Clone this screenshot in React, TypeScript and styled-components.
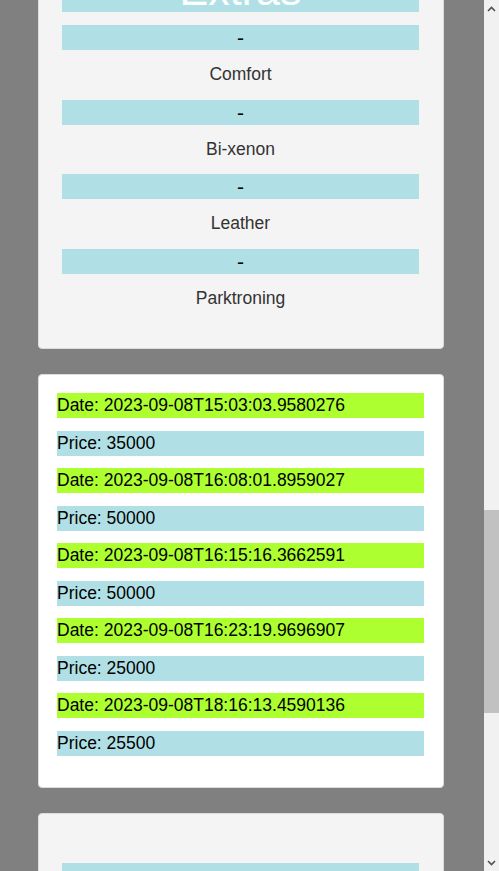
import React, { useLayoutEffect, useState } from "react";
import styled, { createGlobalStyle } from "styled-components";

const GlobalStyle = createGlobalStyle`
  html, body {
    margin: 0;
    padding: 0;
    background: #808080;
  }
  body {
    font-family: "Liberation Sans", Arial, sans-serif;
  }
`;

const Page = styled.main`
  display: flex;
  flex-direction: column;
  gap: 25.5px;
  padding: 25px 55px 25px 38px;
`;

const Card = styled.section<{ $tone: "gray" | "white" }>`
  box-sizing: border-box;
  width: 406px;
  border: 1px solid #dcdcdc;
  border-radius: 4px;
  background: ${(p) => (p.$tone === "gray" ? "#f4f4f4" : "#ffffff")};
`;

const CarCard = styled(Card)`
  display: flex;
  flex-direction: column;
  padding: 49px 24px 24px 23px;
`;

const BidCard = styled(Card)`
  display: flex;
  flex-direction: column;
  gap: 12.5px;
  padding: 18px 19px 31px 18px;
`;

const Heading = styled.h2`
  margin: 0;
  height: 44px;
  line-height: 44px;
  background: #b0e0e6;
  color: #ffffff;
  font-size: 43px;
  font-weight: normal;
  text-align: center;
  overflow: hidden;
`;

const TitleHeading = styled(Heading)`
  height: 60px;
  line-height: 64px;
`;

const Section = styled.div`
  display: flex;
  flex-direction: column;
  margin-top: 13px;
`;

const Label = styled.p`
  margin: 0;
  height: 49.67px;
  line-height: 48px;
  color: #333333;
  font-size: 17.5px;
  text-align: center;
`;

const RemoveButton = styled.button`
  display: block;
  width: 100%;
  height: 25px;
  margin: 0;
  padding: 0;
  border: none;
  background: #b0e0e6;
  color: #000000;
  font-family: "Liberation Sans", Arial, sans-serif;
  font-size: 21px;
  line-height: 25px;
  cursor: pointer;
`;

const BidRow = styled.p<{ $kind: "date" | "price" }>`
  margin: 0;
  height: 25px;
  line-height: 25px;
  background: ${(p) => (p.$kind === "date" ? "#adff2f" : "#b0e0e6")};
  color: #000000;
  font-size: 17.5px;
  white-space: nowrap;
`;

/* Scroll indicator overlay pinned to the right edge of the viewport */
const ScrollRail = styled.div`
  position: fixed;
  top: 0;
  right: 0;
  width: 15px;
  height: 100vh;
  display: flex;
  flex-direction: column;
  background: #f1f1f1;
  z-index: 10;
`;

const RailButton = styled.div`
  flex: 0 0 17px;
  display: flex;
  align-items: center;
  justify-content: center;
`;

const RailTrack = styled.div`
  position: relative;
  flex: 1;
`;

const RailThumb = styled.div`
  position: absolute;
  left: 0;
  right: 0;
  background: #c1c1c1;
`;

type Bid = { date: string; price: number };
type Car = {
  title: string;
  details: string[];
  extras: string[];
  bids: Bid[];
};

const cars: Car[] = [
  {
    title: "Opel Astra",
    details: [
      "Brand: Opel",
      "Model: Astra",
      "Year: 2014",
      "Engine: Diesel",
      "Mileage: 168000",
      "Starting price: 12000",
    ],
    extras: ["Navigation", "Climatronic", "Alloy wheels"],
    bids: [
      { date: "2023-09-07T09:12:44.1023847", price: 12000 },
      { date: "2023-09-07T09:40:02.5521093", price: 12500 },
      { date: "2023-09-07T10:05:19.8810246", price: 13000 },
      { date: "2023-09-07T11:22:37.3309581", price: 13500 },
      { date: "2023-09-07T12:48:56.0045712", price: 14000 },
      { date: "2023-09-07T14:01:08.7793320", price: 14200 },
      { date: "2023-09-07T15:36:41.2218469", price: 14800 },
      { date: "2023-09-07T17:19:25.6640175", price: 15000 },
      { date: "2023-09-07T19:03:12.9087534", price: 15500 },
      { date: "2023-09-07T21:44:50.3391208", price: 16000 },
    ],
  },
  {
    title: "BMW 320d",
    details: [
      "Brand: BMW",
      "Model: 320d",
      "Year: 2017",
      "Engine: Diesel",
      "Mileage: 132000",
      "Color: Black",
      "Starting price: 25000",
    ],
    extras: ["Comfort", "Bi-xenon", "Leather", "Parktroning"],
    bids: [
      { date: "2023-09-08T15:03:03.9580276", price: 35000 },
      { date: "2023-09-08T16:08:01.8959027", price: 50000 },
      { date: "2023-09-08T16:15:16.3662591", price: 50000 },
      { date: "2023-09-08T16:23:19.9696907", price: 25000 },
      { date: "2023-09-08T18:16:13.4590136", price: 25500 },
    ],
  },
  {
    title: "Audi A4",
    details: [
      "Brand: Audi",
      "Model: A4",
      "Year: 2015",
      "Engine: Petrol",
      "Mileage: 149000",
      "Color: White",
      "Starting price: 18000",
    ],
    extras: ["Sunroof"],
    bids: [],
  },
];

const ANCHOR_ID = "anchor-extras";
const RAIL_BUTTON = 17;

function CarListing({ car, anchor }: { car: Car; anchor: boolean }) {
  return (
    <CarCard $tone="gray">
      <TitleHeading>{car.title}</TitleHeading>
      <Section>
        {car.details.map((d) => (
          <Label key={d}>{d}</Label>
        ))}
      </Section>
      <Section>
        <Heading id={anchor ? ANCHOR_ID : undefined}>Extras</Heading>
      </Section>
      <Section>
        {car.extras.map((e) => (
          <div key={e}>
            <RemoveButton type="button">-</RemoveButton>
            <Label>{e}</Label>
          </div>
        ))}
      </Section>
    </CarCard>
  );
}

function BidHistory({ bids }: { bids: Bid[] }) {
  return (
    <BidCard $tone="white">
      {bids.map((b) => (
        <React.Fragment key={b.date}>
          <BidRow $kind="date">Date: {b.date}</BidRow>
          <BidRow $kind="price">Price: {b.price}</BidRow>
        </React.Fragment>
      ))}
    </BidCard>
  );
}

function Chevron({ up }: { up: boolean }) {
  return (
    <svg width="9" height="6" viewBox="0 0 9 6" aria-hidden="true">
      <path
        d={up ? "M1 5 L4.5 1.5 L8 5" : "M1 1 L4.5 4.5 L8 1"}
        fill="none"
        stroke="#505050"
        strokeWidth="1.6"
      />
    </svg>
  );
}

function ScrollIndicator() {
  const [thumb, setThumb] = useState({ top: 0, height: 0 });

  useLayoutEffect(() => {
    const update = () => {
      const doc = document.documentElement;
      const view = window.innerHeight;
      const total = doc.scrollHeight;
      const track = view - RAIL_BUTTON * 2;
      const height = Math.max(20, (track * view) / total);
      const maxScroll = Math.max(1, total - view);
      const top = ((track - height) * window.scrollY) / maxScroll;
      setThumb({ top, height });
    };
    update();
    window.addEventListener("scroll", update);
    window.addEventListener("resize", update);
    return () => {
      window.removeEventListener("scroll", update);
      window.removeEventListener("resize", update);
    };
  }, []);

  return (
    <ScrollRail aria-hidden="true">
      <RailButton>
        <Chevron up />
      </RailButton>
      <RailTrack>
        <RailThumb style={{ top: thumb.top, height: thumb.height }} />
      </RailTrack>
      <RailButton>
        <Chevron up={false} />
      </RailButton>
    </ScrollRail>
  );
}

export default function App() {
  useLayoutEffect(() => {
    const el = document.getElementById(ANCHOR_ID);
    if (el) {
      const rect = el.getBoundingClientRect();
      window.scrollTo(0, Math.round(window.scrollY + rect.bottom - 12));
    }
  }, []);

  return (
    <>
      <GlobalStyle />
      <Page>
        {cars.map((car, i) => (
          <React.Fragment key={car.title}>
            <CarListing car={car} anchor={i === 1} />
            {car.bids.length > 0 && <BidHistory bids={car.bids} />}
          </React.Fragment>
        ))}
      </Page>
      <ScrollIndicator />
    </>
  );
}
